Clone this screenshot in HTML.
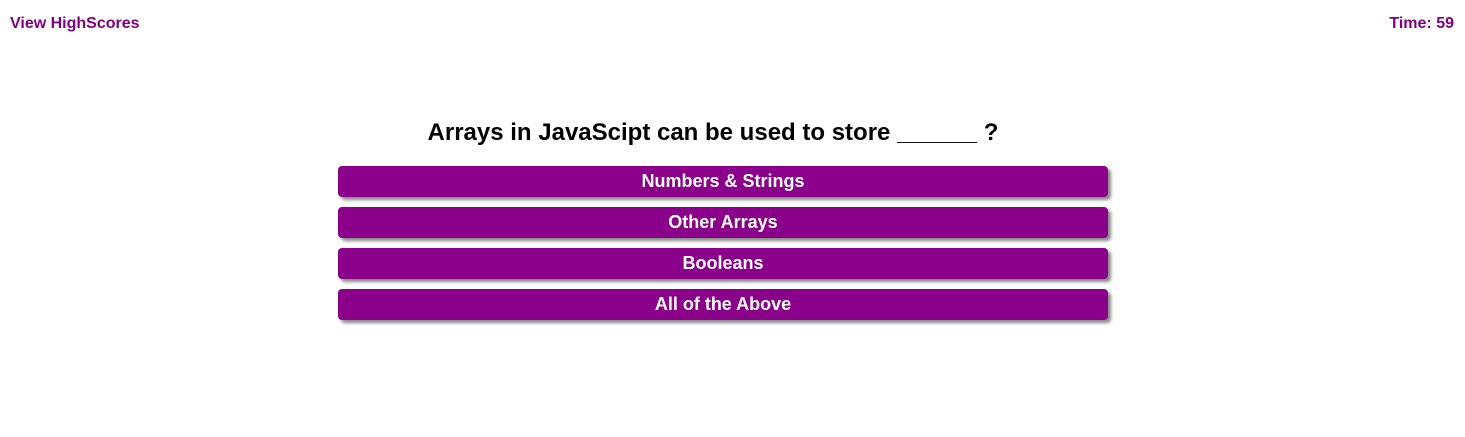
<!DOCTYPE html>
<html><head><style>
body{margin:0;width:1465px;height:437px;background:#fff;font-family:"Liberation Sans",Arial,sans-serif;position:relative;overflow:hidden}
.hs{position:absolute;left:10px;top:15px;font-size:16px;font-weight:bold;color:#800080}
.tm{position:absolute;right:11px;top:15px;font-size:16px;font-weight:bold;color:#800080}
h1{position:absolute;top:119px;left:0;width:1426px;text-align:center;margin:0;font-size:24px;font-weight:bold;color:#000}
.b{position:absolute;left:338px;width:770px;height:31px;background:#8b008b;border-radius:4px;box-shadow:3px 3px 3px #888;color:#fff;font-weight:bold;font-size:18px;text-align:center;line-height:30px}
</style></head><body>
<div class="hs">View HighScores</div>
<div class="tm">Time: 59</div>
<h1>Arrays in JavaScipt can be used to store ______ ?</h1>
<div class="b" style="top:166px">Numbers &amp; Strings</div>
<div class="b" style="top:207px">Other Arrays</div>
<div class="b" style="top:248px">Booleans</div>
<div class="b" style="top:289px">All of the Above</div>
</body></html>
